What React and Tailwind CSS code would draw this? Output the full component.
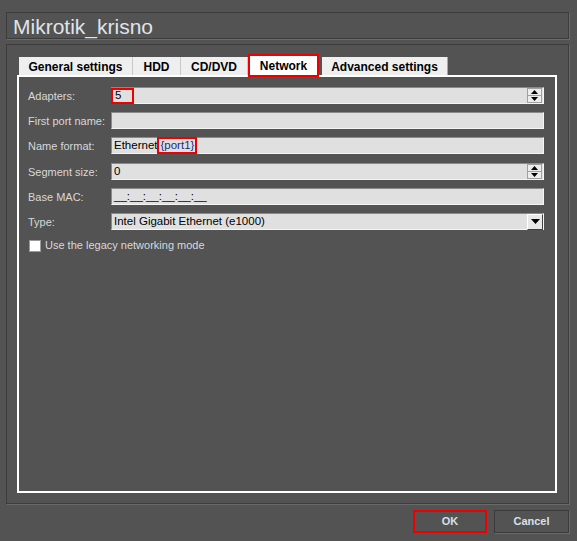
import React from 'react';

const font = { fontFamily: '"Liberation Sans", Arial, sans-serif' };

function SpinButtons() {
  return (
    <div className="flex flex-col w-[15px] h-[15px] border border-[#a0a0a0] bg-[#ececec] ml-auto mr-[1px]">
      <div className="flex-1 flex items-center justify-center border-b border-[#a0a0a0]">
        <svg width="7" height="4" viewBox="0 0 7 4"><path d="M0 4 L3.5 0 L7 4 Z" fill="#000" /></svg>
      </div>
      <div className="flex-1 flex items-center justify-center">
        <svg width="7" height="4" viewBox="0 0 7 4"><path d="M0 0 L7 0 L3.5 4 Z" fill="#000" /></svg>
      </div>
    </div>
  );
}

function Field({ children, spin, drop }) {
  return (
    <div className="flex items-center w-[433px] h-[17px] bg-[#e0e0e0] border border-t-[#8a8a8a] border-l-[#8a8a8a] border-b-[#f4f4f4] border-r-[#f4f4f4] text-[11.5px] text-black">
      <div className="flex items-center h-full pl-[2px]">{children}</div>
      {spin && <SpinButtons />}
      {drop && (
        <div className="ml-auto w-[16px] h-[16px] flex items-center justify-center bg-[#e8e8e8] border border-t-white border-l-white border-b-[#404040] border-r-[#404040]">
          <svg width="9" height="5" viewBox="0 0 9 5"><path d="M0 0 L9 0 L4.5 5 Z" fill="#000" /></svg>
        </div>
      )}
    </div>
  );
}

function Row({ label, children, className = '' }) {
  return (
    <div className={`flex items-center h-[17px] ${className}`}>
      <div className="w-[83px] text-[11px] text-[#d8d8d8] pt-[1px]">{label}</div>
      {children}
    </div>
  );
}

export default function App() {
  const tabs = [
    { name: 'General settings', w: 'w-[114px]' },
    { name: 'HDD', w: 'w-[48px]' },
    { name: 'CD/DVD', w: 'w-[67px]' },
  ];

  return (
    <div className="w-[577px] h-[541px] bg-[#535353] pt-[12px] px-[6px] overflow-hidden" style={font}>
      {/* title */}
      <div className="w-[563px] h-[27px] border border-[#3c3c3c] shadow-[1px_1px_0_#6a6a6a] flex items-center pl-[6px] pt-[2px]">
        <span className="text-[21px] leading-none text-[#dfe4ea]">Mikrotik_krisno</span>
      </div>

      {/* group */}
      <div className="mt-[5px] w-[563px] h-[460px] border border-[#3c3c3c] shadow-[1px_1px_0_#6a6a6a] pt-[9px] pl-[10px]">
        <div className="flex items-end h-[21px] pl-[2px]">
          {tabs.map(t => (
            <div key={t.name} className={`${t.w} h-[18px] pt-[1px] bg-[#efefef] border-r border-[#c8c8c8] flex items-center justify-center text-[12px] font-bold text-black`}>
              {t.name}
            </div>
          ))}
          <div className="relative z-10 w-[71px] h-[23px] -mb-[2px] pt-[1px] bg-white border-2 border-[#ee0000] flex items-center justify-center text-[12px] font-bold text-black">
            Network
          </div>
          <div className="ml-[3px] w-[126px] h-[18px] pt-[1px] bg-[#efefef] border-r border-[#a8a8a8] flex items-center justify-center text-[12px] font-bold text-black">
            Advanced settings
          </div>
        </div>

        <div className="w-[540px] h-[418px] border-2 border-white pt-[10px] pl-[9px] flex flex-col">
          <Row label="Adapters:">
            <Field spin>
              <span className="border-2 border-[#ee0000] h-[16px] w-[23px] -ml-[3px] pl-[2px] flex items-center">5</span>
            </Field>
          </Row>
          <Row label="First port name:" className="mt-[8px]">
            <Field />
          </Row>
          <Row label="Name format:" className="mt-[8px]">
            <Field>
              <span>Ethernet</span>
              <span className="border-2 border-[#ee0000] h-[17px] px-[1px] flex items-center text-[#1a2a80]">{'{port1}'}</span>
            </Field>
          </Row>
          <Row label="Segment size:" className="mt-[9px]">
            <Field spin>0</Field>
          </Row>
          <Row label="Base MAC:" className="mt-[8px]">
            <Field>__:__:__:__:__:__</Field>
          </Row>
          <Row label="Type:" className="mt-[8px]">
            <Field drop>Intel Gigabit Ethernet (e1000)</Field>
          </Row>
          <div className="flex items-center h-[13px] pl-[1px] mt-[9px]">
            <div className="w-[12px] h-[12px] bg-white border border-[#9a9a9a]" />
            <span className="ml-[4px] text-[11px] text-[#d8d8d8]">Use the legacy networking mode</span>
          </div>
        </div>
      </div>

      {/* buttons */}
      <div className="flex justify-end gap-[7px] mt-[6px] pr-[2px]">
        <div className="w-[74px] h-[23px] border-2 border-[#ee0000] flex items-center justify-center text-[11px] font-bold text-[#d8e0e8]">
          OK
        </div>
        <div className="w-[75px] h-[23px] border border-[#3a3a3a] shadow-[1px_1px_0_#6a6a6a] flex items-center justify-center text-[11px] font-bold text-[#d8e0e8]">
          Cancel
        </div>
      </div>
    </div>
  );
}
